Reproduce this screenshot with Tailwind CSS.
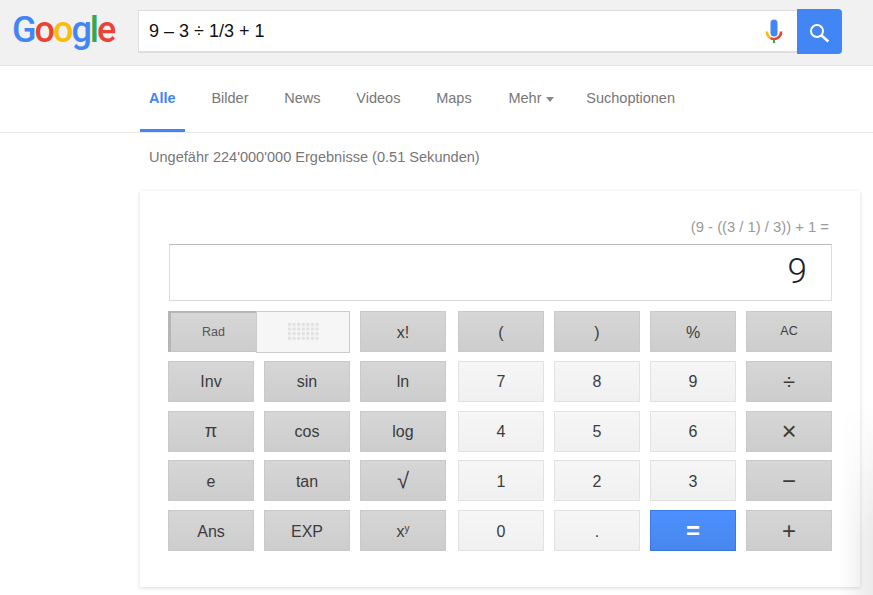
<!DOCTYPE html>
<html lang="de">
<head>
    <meta charset="UTF-8">
    <title>9 – 3 ÷ 1/3 + 1 - Google-Suche</title>
    <script src="https://cdn.jsdelivr.net/npm/@tailwindcss/browser@4"></script>
</head>
<body class="relative h-[595px] overflow-hidden bg-white font-['Liberation_Sans',Arial,sans-serif]">
    <!-- search header -->
    <header class="flex h-[66px] items-start border-b border-[#e4e4e4] bg-[#f1f1f1]">
        <div class="ml-[12px] mt-[6px] w-[126px] font-['Roboto',sans-serif] text-[36px] font-medium leading-[48px] tracking-[-2px]">
            <span class="text-[#4285f4]">G</span><span class="text-[#ea4335]">o</span><span class="text-[#fbbc05]">o</span><span class="text-[#4285f4]">g</span><span class="text-[#34a853]">l</span><span class="text-[#ea4335]">e</span>
        </div>
        <div class="mt-[10px] flex h-[43px] w-[659px] items-center border border-b-2 border-[#dedede] border-r-0 bg-white pl-[10px] pr-[14px]">
            <span class="flex-1 text-[18px] text-[#111]">9 – 3 ÷ 1/3 + 1</span>
            <svg width="18" height="25" viewBox="0 0 18 25" fill="none">
                <rect x="5.5" y="0.5" width="7" height="17" rx="3.5" fill="#4285f4"/>
                <path d="M2 12.5a7 7 0 0 0 3.5 6.5" stroke="#fbbc05" stroke-width="2.5"/>
                <path d="M5.5 19a7 7 0 0 0 10.5-6.5" stroke="#ea4335" stroke-width="2.5"/>
                <rect x="8" y="20.5" width="2" height="3.5" fill="#34a853"/>
            </svg>
        </div>
        <button class="mt-[9px] flex h-[45px] w-[45px] items-center justify-center rounded-r-sm bg-[#4285f4]">
            <svg width="22" height="22" viewBox="0 0 22 22" fill="none" stroke="#fff">
                <circle cx="8" cy="10" r="6" stroke-width="2"/>
                <path d="M12.3 14.3l7 6.2" stroke-width="2.6"/>
            </svg>
        </button>
    </header>

    <!-- tabs -->
    <nav class="flex h-[67px] items-center gap-[35.8px] border-b border-[#e8e8e8] pl-[149px] text-[14.5px] text-[#777]">
        <a class="relative font-bold text-[#4285f4]">Alle
            <span class="absolute left-[-9px] top-[41px] h-[3px] w-[45px] bg-[#4285f4]"></span>
        </a>
        <a>Bilder</a>
        <a>News</a>
        <a>Videos</a>
        <a>Maps</a>
        <a class="ml-[1px] flex items-center gap-[4px]">Mehr <span class="border-x-[4.5px] border-t-[5px] border-x-transparent border-t-[#888]"></span></a>
        <a class="ml-[-3px]">Suchoptionen</a>
    </nav>

    <p class="pl-[149px] pt-[16px] text-[14.55px] leading-[17px] text-[#777]">Ungefähr 224'000'000 Ergebnisse (0.51 Sekunden)</p>

    <!-- calculator card -->
    <section class="ml-[140px] mt-[25px] h-[396px] w-[720px] bg-white px-[28px] pt-[27px] shadow-[0_1px_4px_rgba(0,0,0,0.15)]">
        <div class="pr-[3px] text-right text-[14.8px] leading-[18px] text-[#999]">(9 - ((3 / 1) / 3)) + 1 =</div>
        <div class="ml-[1px] mt-[8px] flex h-[57px] items-center justify-end border border-[#dcdcdc] border-t-[#bbb] pr-[24px] font-['Roboto',sans-serif] text-[35px] font-light text-[#222]">9</div>
        <div class="mt-[10px] grid grid-cols-[86px_86px_88px_86px_86px_86px_86px] gap-x-[10px] gap-y-[8.75px] text-[#3c3c3c]">
            <!-- Rad / Deg switch -->
            <div class="col-span-2 flex h-[41px]">
                <div class="flex w-[88px] items-center justify-center border border-[#c4c4c4] border-l-[3px] border-t-[2px] border-l-[#b5b5b5] border-t-[#b5b5b5] border-r-0 bg-gradient-to-b from-[#d6d6d6] to-[#cdcdcd] text-[12.5px] text-[#555]">Rad</div>
                <div class="flex h-[42px] flex-1 items-center justify-center border border-[#ccc] bg-[#f6f6f6]">
                    <svg width="31" height="18" fill="#e0e0e0">
                        <defs>
                            <pattern id="grip" width="4.6" height="4.6" patternUnits="userSpaceOnUse">
                                <rect width="3" height="3"/>
                            </pattern>
                        </defs>
                        <rect width="31" height="18" fill="url(#grip)"/>
                    </svg>
                </div>
            </div>
            <button class="flex h-[41px] w-[86px] items-center justify-center border border-[#c9c9c9] bg-gradient-to-b from-[#d6d6d6] to-[#cdcdcd] pt-[2px] text-[16px]">x!</button>
            <button class="flex h-[41px] items-center justify-center border border-[#c9c9c9] bg-gradient-to-b from-[#d6d6d6] to-[#cdcdcd] pt-[2px] text-[16px]">(</button>
            <button class="flex h-[41px] items-center justify-center border border-[#c9c9c9] bg-gradient-to-b from-[#d6d6d6] to-[#cdcdcd] pt-[2px] text-[16px]">)</button>
            <button class="flex h-[41px] items-center justify-center border border-[#c9c9c9] bg-gradient-to-b from-[#d6d6d6] to-[#cdcdcd] pt-[2px] text-[16px]">%</button>
            <button class="flex h-[41px] items-center justify-center border border-[#c9c9c9] bg-gradient-to-b from-[#d6d6d6] to-[#cdcdcd] text-[12.5px]">AC</button>

            <button class="flex h-[41px] items-center justify-center border border-[#c9c9c9] bg-gradient-to-b from-[#d6d6d6] to-[#cdcdcd] pt-[2px] text-[16px]">Inv</button>
            <button class="flex h-[41px] items-center justify-center border border-[#c9c9c9] bg-gradient-to-b from-[#d6d6d6] to-[#cdcdcd] pt-[2px] text-[16px]">sin</button>
            <button class="flex h-[41px] w-[86px] items-center justify-center border border-[#c9c9c9] bg-gradient-to-b from-[#d6d6d6] to-[#cdcdcd] pt-[2px] text-[16px]">ln</button>
            <button class="flex h-[41px] items-center justify-center border border-[#e2e2e2] bg-gradient-to-b from-[#f6f6f6] to-[#f0f0f0] pt-[2px] text-[16px]">7</button>
            <button class="flex h-[41px] items-center justify-center border border-[#e2e2e2] bg-gradient-to-b from-[#f6f6f6] to-[#f0f0f0] pt-[2px] text-[16px]">8</button>
            <button class="flex h-[41px] items-center justify-center border border-[#e2e2e2] bg-gradient-to-b from-[#f6f6f6] to-[#f0f0f0] pt-[2px] text-[16px]">9</button>
            <button class="flex h-[41px] items-center justify-center border border-[#c9c9c9] bg-gradient-to-b from-[#d6d6d6] to-[#cdcdcd] text-[22px]">÷</button>

            <button class="flex h-[41px] items-center justify-center border border-[#c9c9c9] bg-gradient-to-b from-[#d6d6d6] to-[#cdcdcd] text-[18px]">π</button>
            <button class="flex h-[41px] items-center justify-center border border-[#c9c9c9] bg-gradient-to-b from-[#d6d6d6] to-[#cdcdcd] pt-[2px] text-[16px]">cos</button>
            <button class="flex h-[41px] w-[86px] items-center justify-center border border-[#c9c9c9] bg-gradient-to-b from-[#d6d6d6] to-[#cdcdcd] pt-[2px] text-[16px]">log</button>
            <button class="flex h-[41px] items-center justify-center border border-[#e2e2e2] bg-gradient-to-b from-[#f6f6f6] to-[#f0f0f0] pt-[2px] text-[16px]">4</button>
            <button class="flex h-[41px] items-center justify-center border border-[#e2e2e2] bg-gradient-to-b from-[#f6f6f6] to-[#f0f0f0] pt-[2px] text-[16px]">5</button>
            <button class="flex h-[41px] items-center justify-center border border-[#e2e2e2] bg-gradient-to-b from-[#f6f6f6] to-[#f0f0f0] pt-[2px] text-[16px]">6</button>
            <button class="flex h-[41px] items-center justify-center border border-[#c9c9c9] bg-gradient-to-b from-[#d6d6d6] to-[#cdcdcd] text-[26px]">×</button>

            <button class="flex h-[41px] items-center justify-center border border-[#c9c9c9] bg-gradient-to-b from-[#d6d6d6] to-[#cdcdcd] pt-[2px] text-[16px]">e</button>
            <button class="flex h-[41px] items-center justify-center border border-[#c9c9c9] bg-gradient-to-b from-[#d6d6d6] to-[#cdcdcd] pt-[2px] text-[16px]">tan</button>
            <button class="flex h-[41px] w-[86px] items-center justify-center border border-[#c9c9c9] bg-gradient-to-b from-[#d6d6d6] to-[#cdcdcd] text-[22px]">√</button>
            <button class="flex h-[41px] items-center justify-center border border-[#e2e2e2] bg-gradient-to-b from-[#f6f6f6] to-[#f0f0f0] pt-[2px] text-[16px]">1</button>
            <button class="flex h-[41px] items-center justify-center border border-[#e2e2e2] bg-gradient-to-b from-[#f6f6f6] to-[#f0f0f0] pt-[2px] text-[16px]">2</button>
            <button class="flex h-[41px] items-center justify-center border border-[#e2e2e2] bg-gradient-to-b from-[#f6f6f6] to-[#f0f0f0] pt-[2px] text-[16px]">3</button>
            <button class="flex h-[41px] items-center justify-center border border-[#c9c9c9] bg-gradient-to-b from-[#d6d6d6] to-[#cdcdcd] text-[24px]">−</button>

            <button class="flex h-[41px] items-center justify-center border border-[#c9c9c9] bg-gradient-to-b from-[#d6d6d6] to-[#cdcdcd] pt-[2px] text-[16px]">Ans</button>
            <button class="flex h-[41px] items-center justify-center border border-[#c9c9c9] bg-gradient-to-b from-[#d6d6d6] to-[#cdcdcd] pt-[2px] text-[16px]">EXP</button>
            <button class="flex h-[41px] w-[86px] items-center justify-center border border-[#c9c9c9] bg-gradient-to-b from-[#d6d6d6] to-[#cdcdcd] pt-[2px] text-[16px]"><span>x<sup class="text-[10px]">y</sup></span></button>
            <button class="flex h-[41px] items-center justify-center border border-[#e2e2e2] bg-gradient-to-b from-[#f6f6f6] to-[#f0f0f0] pt-[2px] text-[16px]">0</button>
            <button class="flex h-[41px] items-center justify-center border border-[#e2e2e2] bg-gradient-to-b from-[#f6f6f6] to-[#f0f0f0] pt-[2px] text-[16px]">.</button>
            <button class="flex h-[41px] items-center justify-center border border-[#3b78e7] bg-gradient-to-b from-[#4d90fe] to-[#4787ed] text-[24px] font-bold text-white">=</button>
            <button class="flex h-[41px] items-center justify-center border border-[#c9c9c9] bg-gradient-to-b from-[#d6d6d6] to-[#cdcdcd] text-[24px]">+</button>
        </div>
    </section>

    <!-- faint shade lying over the lower right corner -->
    <div class="absolute bottom-0 right-0 h-[190px] w-[35px] bg-gradient-to-r from-transparent to-black/[0.08] [mask-image:linear-gradient(to_bottom,transparent,black_70%)]"></div>
</body>
</html>
